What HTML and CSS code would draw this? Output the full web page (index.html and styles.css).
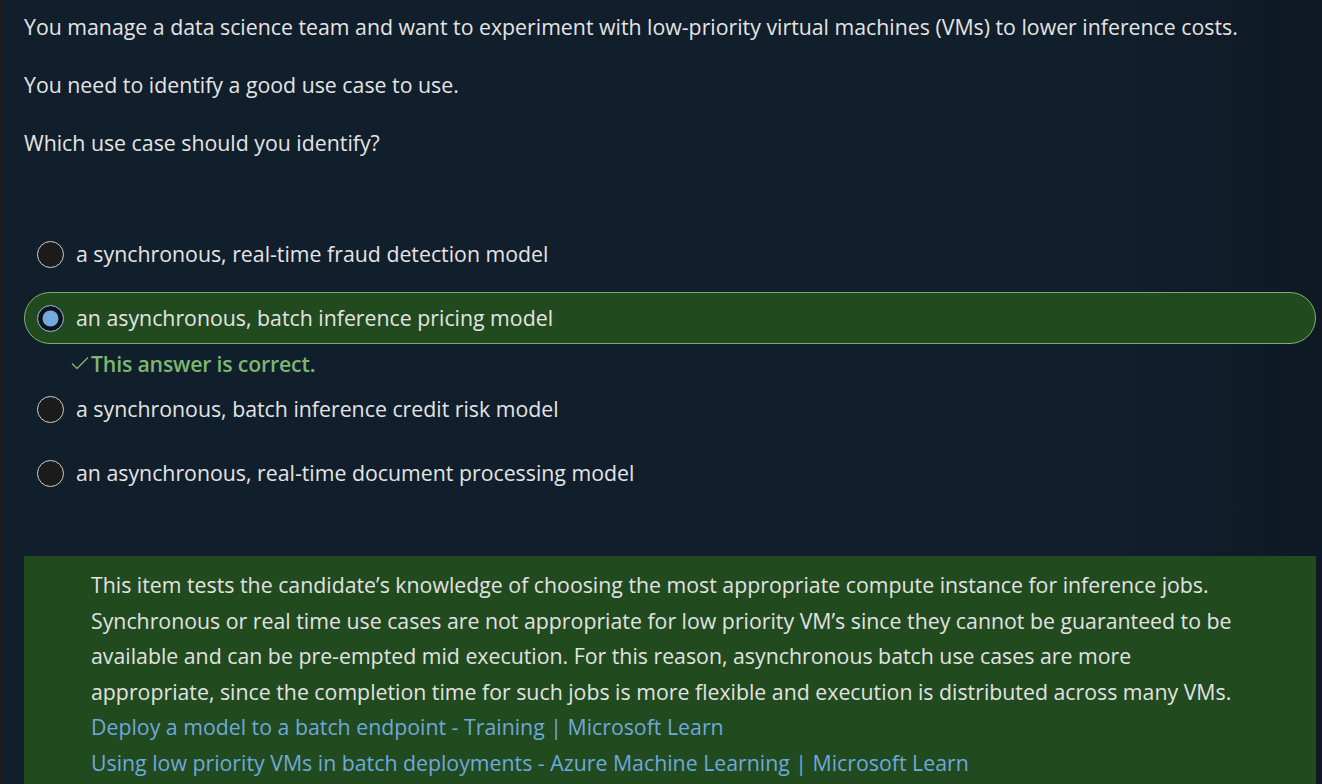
FILE: index.html
```html
<!DOCTYPE html>
<html lang="en">
<head>
<meta charset="utf-8">
<title>Question</title>
<link rel="stylesheet" href="styles.css">
</head>
<body>
<div class="page">
  <div class="question">
    <p>You manage a data science team and want to experiment with low-priority virtual machines (VMs) to lower inference costs.</p>
    <p>You need to identify a good use case to use.</p>
    <p>Which use case should you identify?</p>
  </div>
  <div class="options">
    <div class="option"><span class="radio"></span><span class="label">a synchronous, real-time fraud detection model</span></div>
    <div class="option selected"><span class="radio"></span><span class="label">an asynchronous, batch inference pricing model</span></div>
    <div class="feedback"><svg class="check" width="20" height="16" viewBox="0 0 20 16"><path d="M2 8.5 L7 13.5 L18 2.5" fill="none" stroke="#7ab86f" stroke-width="1.3"/></svg><span>This answer is correct.</span></div>
    <div class="option"><span class="radio"></span><span class="label">a synchronous, batch inference credit risk model</span></div>
    <div class="option"><span class="radio"></span><span class="label">an asynchronous, real-time document processing model</span></div>
  </div>
  <div class="explanation">
    <p>This item tests the candidate’s knowledge of choosing the most appropriate compute instance for inference jobs.<br>Synchronous or real time use cases are not appropriate for low priority VM’s since they cannot be guaranteed to be<br>available and can be pre-empted mid execution. For this reason, asynchronous batch use cases are more<br>appropriate, since the completion time for such jobs is more flexible and execution is distributed across many VMs.</p>
    <a href="#">Deploy a model to a batch endpoint - Training | Microsoft Learn</a>
    <a href="#">Using low priority VMs in batch deployments - Azure Machine Learning | Microsoft Learn</a>
  </div>
</div>
</body>
</html>
```
FILE: styles.css
```css
html, body {
  margin: 0;
  padding: 0;
  height: 100%;
}
body {
  background: linear-gradient(to right, #111e2b 0%, #111e2b 85%, #0e1925 100%);
  border-left: 3px solid #1d1d1f;
  box-sizing: border-box;
  font-family: "Open Sans", "Segoe UI", sans-serif;
  color: #e4e4e4;
  font-size: 21.3px;
  overflow: hidden;
}
.page {
  padding: 12px 6px 0 21px;
}
.question p {
  margin: 0 0 28px 0;
  line-height: 30px;
  white-space: nowrap;
}
.question p:last-child {
  margin-bottom: 0;
}
.options {
  margin-top: 70px;
  display: flex;
  flex-direction: column;
}
.option {
  display: flex;
  align-items: center;
  gap: 12px;
  height: 52px;
  box-sizing: border-box;
  padding-left: 12px;
  border: 1.5px solid transparent;
  border-radius: 26px;
  margin-bottom: 12px;
}
.option.selected {
  background: #214a1f;
  border-color: #7cb06d;
  margin-bottom: 0;
}
.radio {
  width: 27px;
  height: 27px;
  box-sizing: border-box;
  border-radius: 50%;
  border: 1.5px solid #cfcfcf;
  background: #1b1b1b;
  flex: none;
}
.selected .radio {
  border: 1.5px solid #72a9df;
  background: #72a9df;
  box-shadow: inset 0 0 0 4.5px #121212;
}
.label {
  line-height: 30px;
}
.feedback {
  display: flex;
  align-items: center;
  height: 39px;
  padding-left: 46px;
  box-sizing: border-box;
  color: #7ab86f;
  font-weight: 600;
  letter-spacing: -0.2px;
  padding-bottom: 1px;
}
.check {
  margin-right: 1px;
}
.explanation {
  margin-top: 45px;
  background: #214a1f;
  padding: 11px 0 20px 67px;
  line-height: 35.5px;
  color: #e2e2e2;
  white-space: nowrap;
}
.explanation p {
  margin: 0;
}
.explanation a {
  display: block;
  color: #6fa8dc;
  text-decoration: none;
}
```
